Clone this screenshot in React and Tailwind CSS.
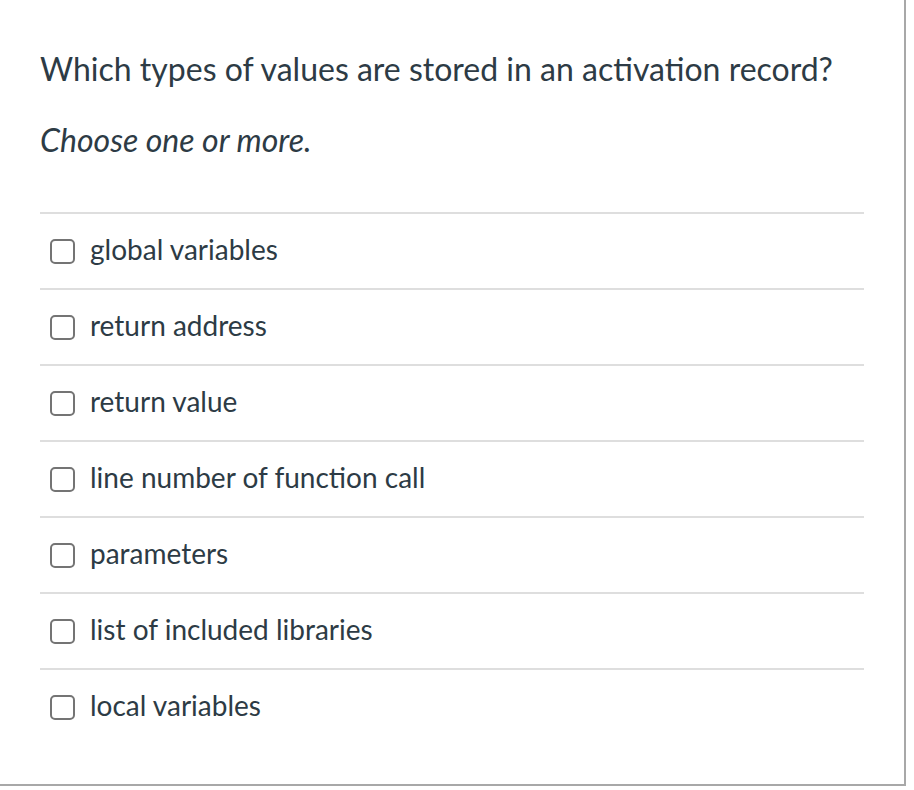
const options = [
  'global variables',
  'return address',
  'return value',
  'line number of function call',
  'parameters',
  'list of included libraries',
  'local variables',
]

export default function App() {
  return (
    <div className="w-[914px] h-[790px] bg-white">
      <div
        className="w-[906px] h-[786px] border-r-2 border-b-2 border-[#a8a8a8] bg-white px-10 pt-[45px] text-[#2d3b45]"
        style={{ fontFamily: 'Lato, "Noto Sans", sans-serif' }}
      >
        <h1 className="text-[32px] leading-[48px] font-normal">
          Which types of values are stored in an activation record?
        </h1>
        <p className="mt-[24px] text-[32px] leading-[46px] italic">Choose one or more.</p>
        <div className="mt-[49px] w-[824px]">
          {options.map((o) => (
            <label key={o} className="flex items-center h-[76px] border-t-2 border-[#dedede]">
              <span className="ml-[10px] w-[25px] h-[25px] rounded-[5px] border-2 border-[#747474] bg-white shrink-0" />
              <span className="ml-[15px] text-[28px] leading-none pb-[5px]">{o}</span>
            </label>
          ))}
        </div>
      </div>
    </div>
  )
}
